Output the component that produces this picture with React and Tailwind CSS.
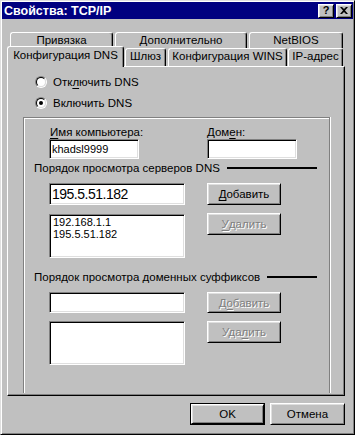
import React from "react";

const raised =
  "border border-t-white border-l-white border-r-black border-b-black shadow-[inset_1px_1px_0_#dfdfdf,inset_-1px_-1px_0_#808080]";
const sunken =
  "border border-t-[#808080] border-l-[#808080] border-r-white border-b-white shadow-[inset_1px_1px_0_#000,inset_-1px_-1px_0_#dfdfdf]";

const U = ({ children }) => <span className="underline underline-offset-[2px]">{children}</span>;

const Btn = ({ children, disabled, className = "" }) => (
  <button
    type="button"
    className={`flex items-center justify-center bg-[#c0c0c0] ${raised} ${className} ${
      disabled ? "text-[#808080] [text-shadow:1px_1px_0_#fff]" : "text-black"
    }`}
  >
    {children}
  </button>
);

const Tab = ({ children, className = "" }) => (
  <div
    className={`flex justify-center whitespace-nowrap bg-[#c0c0c0] border-t border-l border-r border-t-white border-l-white border-r-black rounded-t-[3px] shadow-[inset_-1px_0_0_#808080] ${className}`}
  >
    {children}
  </div>
);

const Radio = ({ checked, children }) => (
  <div className="flex items-center h-[14px] gap-[6px]">
    <div className="w-[12px] h-[12px] rounded-full border border-t-[#808080] border-l-[#808080] border-r-white border-b-white">
      <div className="w-full h-full rounded-full border border-t-black border-l-black border-r-[#dfdfdf] border-b-[#dfdfdf] bg-white flex items-center justify-center">
        {checked && <div className="w-[4px] h-[4px] rounded-full bg-black" />}
      </div>
    </div>
    <span>{children}</span>
  </div>
);

const Section = ({ children }) => (
  <div className="flex items-center h-[14px] pl-[10px] pr-[12px]">
    <span className="whitespace-nowrap">{children}</span>
    <div className="ml-[7px] flex-1 h-[2px] bg-black" />
  </div>
);

export default function App() {
  return (
    <div className="w-[355px] h-[435px] overflow-hidden bg-[#c0c0c0] p-[1px] border border-t-[#dfdfdf] border-l-[#dfdfdf] border-r-black border-b-black shadow-[inset_1px_1px_0_#fff,inset_-1px_-1px_0_#808080] font-['Liberation_Sans',Arial,sans-serif] text-[11.5px] leading-[14px] text-black">
      {/* Title bar */}
      <div className="h-[17px] bg-[#000080] flex items-center pl-[2px] pr-[1px]">
        <span className="flex-1 text-white font-bold text-[12.5px]">Свойства: TCP/IP</span>
        <div className={`w-[16px] h-[14px] bg-[#c0c0c0] ${raised} flex items-center justify-center font-bold text-[11px] leading-none`}>
          ?
        </div>
        <div className={`ml-[2px] w-[16px] h-[14px] bg-[#c0c0c0] ${raised} flex items-center justify-center`}>
          <svg width="8" height="7" viewBox="0 0 8 7">
            <path d="M0 0 L2 0 L4 2 L6 0 L8 0 L5 3.5 L8 7 L6 7 L4 5 L2 7 L0 7 L3 3.5 Z" fill="#000" />
          </svg>
        </div>
      </div>

      {/* Tabs row 1 */}
      <div className="flex ml-[8px] mt-[13px] h-[16px] gap-[2px]">
        <Tab className="w-[103px] h-[16px]">Привязка</Tab>
        <Tab className="w-[132px] h-[16px]">Дополнительно</Tab>
        <Tab className="w-[94px] h-[16px]">NetBIOS</Tab>
      </div>

      {/* Tabs row 2 */}
      <div className="flex items-end ml-[5px] -mt-[2px] h-[20px]">
        <Tab className="relative z-10 w-[117px] h-[21px] -mb-[1px] pt-[1px]">Конфигурация DNS</Tab>
        <Tab className="ml-[1px] w-[41px] h-[18px]">Шлюз</Tab>
        <Tab className="ml-[2px] w-[119px] h-[18px]">Конфигурация WINS</Tab>
        <Tab className="ml-[1px] w-[55px] h-[18px]">IP-адрес</Tab>
      </div>

      {/* Panel */}
      <div className="ml-[5px] w-[338px] h-[330px] border border-t-white border-l-white border-r-black border-b-black shadow-[inset_-1px_-1px_0_#808080]">
        <div className="pl-[27px] pt-[8px]">
          <Radio>
            Отк<U>л</U>ючить DNS
          </Radio>
          <div className="mt-[7px]">
            <Radio checked>Включить DNS</Radio>
          </div>
        </div>

        {/* Group box */}
        <div className="ml-[15px] mt-[7px] w-[307px] h-[276px] border-t border-l border-r border-[#808080] shadow-[inset_1px_1px_0_#fff,1px_0_0_#fff]">
          <div className="flex pl-[25px] mt-[7px]">
            <div className="w-[90px]">
              <div className="h-[14px] pl-[1px] whitespace-nowrap">
                <U>И</U>мя компьютера:
              </div>
              <div className={`h-[20px] bg-white ${sunken} flex items-center pl-[2px] text-[11px]`}>khadsl9999</div>
            </div>
            <div className="ml-[68px] w-[90px]">
              <div className="h-[14px] whitespace-nowrap">
                Дом<U>е</U>н:
              </div>
              <div className={`h-[20px] bg-white ${sunken}`} />
            </div>
          </div>

          <div className="mt-[2px]">
            <Section>Порядок просмотра серверов DNS</Section>
          </div>

          <div className="flex pl-[25px] mt-[8px]">
            <div className={`w-[136px] h-[22px] bg-white ${sunken} flex items-center pl-[2px] text-[14px] tracking-[-0.5px]`}>
              195.5.51.182
            </div>
            <Btn className="ml-[22px] w-[74px] h-[22px]">
              <U>Д</U>обавить
            </Btn>
          </div>

          <div className="flex items-start pl-[25px] mt-[8px]">
            <div className={`mt-[1px] w-[136px] h-[44px] bg-white ${sunken} pl-[3px] pt-[1px] text-[11px] leading-[12px]`}>
              <div>192.168.1.1</div>
              <div>195.5.51.182</div>
            </div>
            <Btn disabled className="ml-[22px] w-[74px] h-[22px]">
              <U>У</U>далить
            </Btn>
          </div>

          <div className="mt-[12px]">
            <Section>Порядок просмотра доменных суффиксов</Section>
          </div>

          <div className="flex pl-[25px] mt-[8px]">
            <div className={`w-[136px] h-[21px] bg-white ${sunken}`} />
            <Btn disabled className="ml-[22px] w-[74px] h-[21px]">
              Д<U>о</U>бавить
            </Btn>
          </div>

          <div className="flex items-start pl-[25px] mt-[8px]">
            <div className={`w-[136px] h-[44px] bg-white ${sunken}`} />
            <Btn disabled className="ml-[22px] w-[74px] h-[22px]">
              Уда<U>л</U>ить
            </Btn>
          </div>
        </div>
      </div>

      {/* Bottom buttons */}
      <div className="flex justify-end pr-[8px] mt-[7px]">
        <div className="w-[75px] h-[22px] border border-black">
          <Btn className="w-full h-full">OK</Btn>
        </div>
        <Btn className="ml-[5px] w-[75px] h-[22px]">Отмена</Btn>
      </div>
    </div>
  );
}
